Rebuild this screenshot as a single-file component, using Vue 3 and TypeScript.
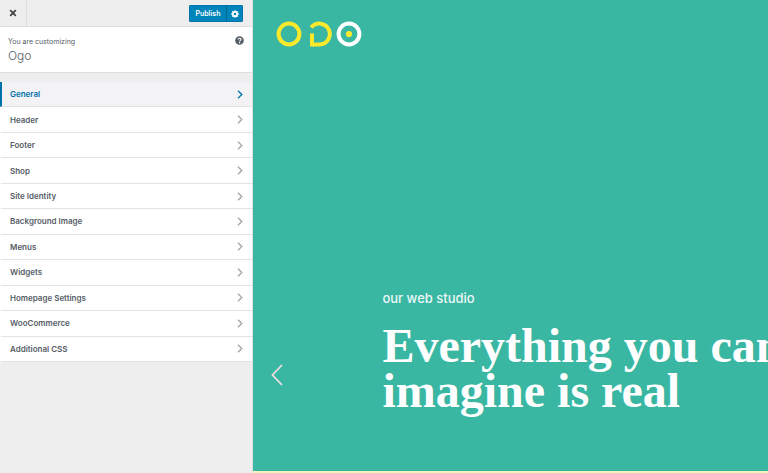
<script setup lang="ts">
import { ref } from 'vue'

const sections: string[] = [
  'General',
  'Header',
  'Footer',
  'Shop',
  'Site Identity',
  'Background Image',
  'Menus',
  'Widgets',
  'Homepage Settings',
  'WooCommerce',
  'Additional CSS',
]
const active = ref('General')
const headline: string[] = ['Everything you can', 'imagine is real']
</script>

<template>
  <div class="customizer">
    <aside class="sidebar">
      <header class="actions">
        <button class="close" type="button" aria-label="Close">
          <svg viewBox="0 0 8 8" width="8" height="8">
            <path d="M1.2 1.2 6.8 6.8M6.8 1.2 1.2 6.8" stroke="currentColor" stroke-width="1.8" />
          </svg>
        </button>
        <div class="publish-group">
          <button class="publish" type="button">Publish</button>
          <button class="settings" type="button" aria-label="Publish settings">
            <svg viewBox="0 0 20 20" width="8" height="8">
              <g stroke="currentColor" stroke-width="4.4">
                <path d="M10 1v18M1 10h18M3.6 3.6l12.8 12.8M16.4 3.6 3.6 16.4" />
              </g>
              <circle cx="10" cy="10" r="6.8" fill="currentColor" />
              <circle cx="10" cy="10" r="3.2" fill="#0085ba" />
            </svg>
          </button>
        </div>
      </header>

      <section class="info">
        <div>
          <p class="notice">You are customizing</p>
          <h1 class="site">Ogo</h1>
        </div>
        <button class="help" type="button" aria-label="Help">
          <svg viewBox="0 0 18 18" width="9" height="9">
            <circle cx="9" cy="9" r="8.6" fill="currentColor" />
            <path d="M6.2 7.2C6.2 3.6 12 3.8 12 6.8 12 8.8 9.3 8.6 9.3 11" fill="none" stroke="#fff" stroke-width="2.2" />
            <circle cx="9.2" cy="13.6" r="1.4" fill="#fff" />
          </svg>
        </button>
      </section>

      <nav class="sections">
        <button
          v-for="name in sections"
          :key="name"
          type="button"
          class="section"
          :class="{ active: name === active }"
          @click="active = name"
        >
          <span>{{ name }}</span>
          <svg viewBox="0 0 6 9" width="6" height="9">
            <path d="M1 .7 4.8 4.5 1 8.3" fill="none" stroke="currentColor" stroke-width="1.3" />
          </svg>
        </button>
      </nav>
    </aside>

    <main class="preview">
      <a class="logo" href="#" aria-label="Ogo">
        <svg viewBox="0 0 86 26" width="86" height="26">
          <g fill="none" stroke="#fde92b" stroke-width="4">
            <circle cx="13" cy="13" r="10.4" />
            <path d="M35.2 6.6A10.4 10.4 0 1 1 43.5 23.4H36" />
            <path d="M36 12.4V25.4" />
          </g>
          <circle cx="73" cy="13" r="10.4" fill="none" stroke="#fff" stroke-width="4" />
          <circle cx="73" cy="13" r="3.1" fill="#fde92b" />
        </svg>
      </a>
      <div class="slide">
        <p class="kicker">our web studio</p>
        <h2 class="headline">
          <span v-for="line in headline" :key="line">{{ line }}</span>
        </h2>
        <button class="previous" type="button" aria-label="Previous slide">
          <svg viewBox="0 0 12 22" width="12" height="22">
            <path d="M11 1 1.4 11 11 21" fill="none" stroke="currentColor" stroke-width="1.7" />
          </svg>
        </button>
      </div>
    </main>
  </div>
</template>

<style>
body {
  margin: 0;
}
</style>

<style scoped>
.customizer {
  display: grid;
  grid-template-columns: 33% 1fr;
  min-height: 100vh;
  overflow: hidden;
  font-family: Inter, "Liberation Sans", sans-serif;
}

button {
  margin: 0;
  padding: 0;
  border: 0;
  background: none;
  font: inherit;
  color: inherit;
  cursor: pointer;
}

svg {
  display: block;
}

.sidebar {
  background: #eee;
  border-right: 1px solid #ddd;
  color: #555d66;
}

.actions {
  display: flex;
  justify-content: space-between;
  align-items: center;
  height: 26px;
  padding-right: 9px;
  border-bottom: 1px solid #ddd;
}

.close {
  display: grid;
  place-items: center;
  align-self: stretch;
  width: 27px;
  border-right: 1px solid #ddd;
  color: #444;
}

.publish-group {
  display: flex;
  height: 17px;
  margin-top: 1px;
  border-radius: 2px;
  background: #0085ba;
  box-shadow: inset 0 0 0 1px #0073aa;
  color: #fff;
}

.publish {
  width: 37px;
  font-size: 7px;
  font-weight: 600;
}

.settings {
  display: grid;
  place-items: center;
  width: 17px;
  border-left: 1px solid #006799;
}

.info {
  display: flex;
  justify-content: space-between;
  align-items: flex-start;
  padding: 9px 8px 8px;
  border-bottom: 1px solid #ddd;
  background: #fff;
}

.notice {
  margin: 0;
  font-size: 7px;
  line-height: 11px;
}

.site {
  margin: 0;
  font-size: 12px;
  font-weight: 300;
  line-height: 17px;
}

.sections {
  display: grid;
  grid-auto-rows: 1fr;
  min-height: 280px;
  margin-top: 9px;
}

.section {
  display: flex;
  justify-content: space-between;
  align-items: center;
  padding: 0 9px 0 8px;
  border-left: 2px solid #fff;
  border-bottom: 1px solid #e2e2e2;
  background: #fff;
  font-size: 8px;
  font-weight: 600;
}

.section svg {
  color: #a0a5aa;
}

.section.active {
  border-left-color: #0073aa;
  background: #f3f3f5;
  color: #0073aa;
}

.section.active svg {
  color: #0073aa;
}

.preview {
  display: flex;
  flex-direction: column;
  justify-content: space-between;
  min-width: 0;
  border-bottom: 2px solid #f5f3bd;
  background: #39b7a3;
  color: #fff;
}

.logo {
  align-self: flex-start;
  margin: 21px 0 0 23px;
}

.slide {
  display: grid;
  grid-template-columns: 129px 1fr;
  padding-bottom: 58px;
}

.kicker {
  grid-column: 2;
  margin: 0 0 16px;
  font-size: 13px;
  font-weight: 500;
  line-height: 18px;
  opacity: 0.9;
}

.headline {
  grid-column: 2;
  grid-row: 2;
  min-width: 0;
  margin: 0;
  font-family: "Liberation Serif", serif;
  font-size: 48px;
  font-weight: 700;
  line-height: 45px;
  white-space: nowrap;
}

.headline span {
  display: block;
}

.previous {
  grid-column: 1;
  grid-row: 2;
  place-self: center start;
  padding-top: 14px;
  margin-left: 18px;
  color: #f5dde2;
}
</style>
